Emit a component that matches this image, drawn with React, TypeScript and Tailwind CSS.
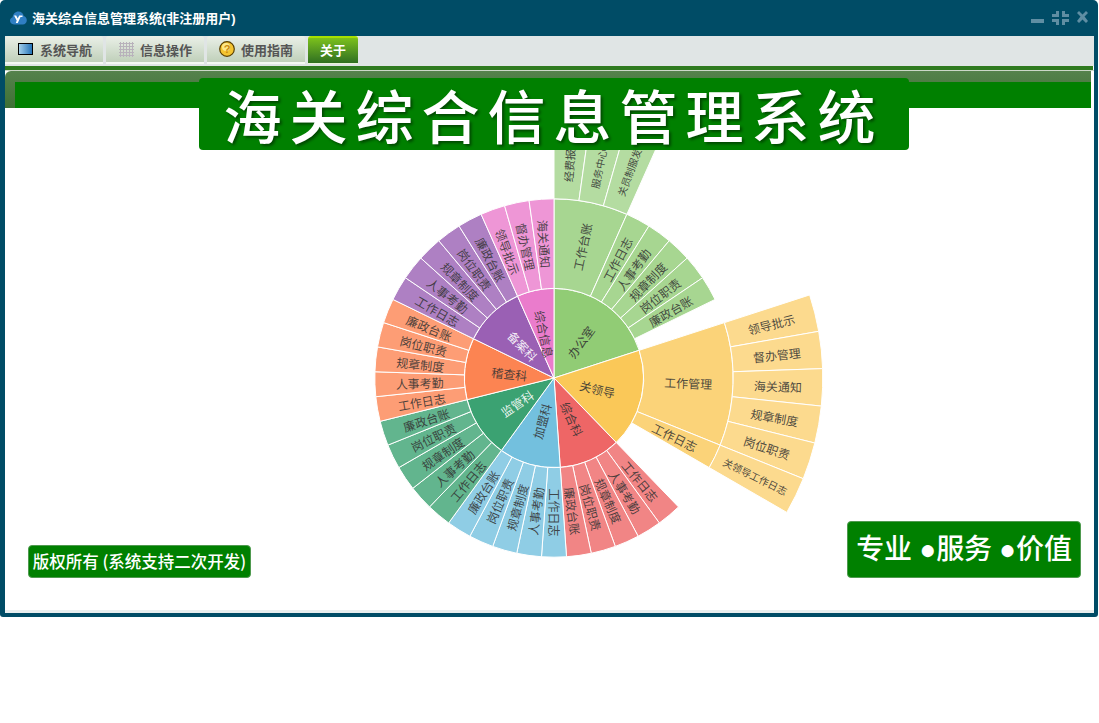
import React from 'react';

interface Node {
  name: string;
  start: number;
  end: number;
  color: string;
  light?: boolean;
  size?: number;
  children?: Node[];
}

const CX = 549;
const CY = 270;
const RING = 89.6;
const CHART_FONT = '"Noto Sans CJK SC", "Noto Sans", sans-serif';

// five evenly spaced leaves, 8 degrees each
function leaves(names: string[], start: number, color: string, size?: number): Node[] {
  return names.map((name, i) => ({ name, start: start + i * 8, end: start + (i + 1) * 8, color, size }));
}

const daily = ['廉政台账', '岗位职责', '规章制度', '人事考勤', '工作日志'];

const tree: Node[] = [
  {
    name: '办公室', start: 0, end: 72, color: '#91cc75',
    children: [
      {
        name: '工作台账', start: 0, end: 24, color: '#91cc75',
        children: [
          { name: '经费报销单', start: 0, end: 8, color: '#91cc75', size: 11 },
          { name: '服务中心工作', start: 8, end: 16, color: '#91cc75', size: 10 },
          { name: '关员制服发放', start: 16, end: 24, color: '#91cc75', size: 10 },
        ],
      },
      ...leaves(['工作日志', '人事考勤', '规章制度', '岗位职责', '廉政台账'], 24, '#91cc75'),
    ],
  },
  {
    name: '关领导', start: 72, end: 136, color: '#fac858',
    children: [
      {
        name: '工作管理', start: 72, end: 112, color: '#fac858',
        children: leaves(['领导批示', '督办管理', '海关通知', '规章制度', '岗位职责'], 72, '#fac858'),
      },
      {
        name: '工作日志', start: 112, end: 120, color: '#fac858',
        children: [{ name: '关领导工作日志', start: 112, end: 120, color: '#fac858', size: 10 }],
      },
    ],
  },
  { name: '综合科', start: 136, end: 176, color: '#ee6666', children: leaves([...daily].reverse(), 136, '#ee6666') },
  { name: '加盟科', start: 176, end: 216, color: '#73c0de', children: leaves([...daily].reverse(), 176, '#73c0de') },
  { name: '监管科', start: 216, end: 256, color: '#3ba272', light: true, children: leaves([...daily].reverse(), 216, '#3ba272') },
  { name: '稽查科', start: 256, end: 296, color: '#fc8452', children: leaves([...daily].reverse(), 256, '#fc8452') },
  { name: '备案科', start: 296, end: 336, color: '#9a60b4', light: true, children: leaves([...daily].reverse(), 296, '#9a60b4') },
  {
    name: '综合信息', start: 336, end: 360, color: '#ea7ccc',
    children: leaves(['领导批示', '督办管理', '海关通知'], 336, '#ea7ccc'),
  },
];

function polar(r: number, deg: number): [number, number] {
  const a = (deg * Math.PI) / 180;
  return [CX + r * Math.sin(a), CY - r * Math.cos(a)];
}

function arcPath(r0: number, r1: number, a0: number, a1: number) {
  const [x1, y1] = polar(r1, a0);
  const [x2, y2] = polar(r1, a1);
  const large = a1 - a0 > 180 ? 1 : 0;
  if (r0 === 0) return `M${CX} ${CY}L${x1} ${y1}A${r1} ${r1} 0 ${large} 1 ${x2} ${y2}Z`;
  const [x3, y3] = polar(r0, a1);
  const [x4, y4] = polar(r0, a0);
  return `M${x1} ${y1}A${r1} ${r1} 0 ${large} 1 ${x2} ${y2}L${x3} ${y3}A${r0} ${r0} 0 ${large} 0 ${x4} ${y4}Z`;
}

const ringOpacity = [1, 0.8, 0.68];

function Slices({ nodes, depth }: { nodes: Node[]; depth: number }) {
  const r0 = depth * RING;
  const r1 = r0 + RING;
  return (
    <>
      {nodes.map((n) => {
        const mid = (n.start + n.end) / 2;
        const [tx, ty] = polar((r0 + r1) / 2, mid);
        const rot = mid <= 180 ? mid - 90 : mid - 270;
        return (
          <g key={n.name + n.start}>
            <path d={arcPath(r0, r1, n.start, n.end)} fill={n.color} fillOpacity={ringOpacity[depth]} stroke="#fff" strokeWidth={1} />
            {n.children && <Slices nodes={n.children} depth={depth + 1} />}
            <text
              x={tx}
              y={ty}
              transform={`rotate(${rot} ${tx} ${ty})`}
              textAnchor="middle"
              dominantBaseline="central"
              fontSize={n.size ?? 12}
              fontFamily={CHART_FONT}
              fill={n.light && depth === 0 ? '#ffffff' : '#333333'}
              fillOpacity={n.light && depth === 0 ? 0.9 : 0.88}
            >
              {n.name}
            </text>
          </g>
        );
      })}
    </>
  );
}

function LogoIcon() {
  return (
    <svg width="17" height="14" viewBox="0 0 17 14">
      <path d="M4 13.5C1.5 13.5 0 11.8 0 9.6 0 7.8 1.2 6.5 2.6 6.2 3 3 5.4 .6 8.4 .6c2.6 0 4.8 1.8 5.3 4.4 1.8.4 3.1 2.1 3.1 4.2 0 2.4-1.8 4.3-4 4.3z" fill="#2f7fc4" />
      <path d="M4 4.500h2.200l1.500 3 1.500-3h3.300v1.500H10.500L7.800 12H5.800l.9-2.400z" fill="#fff" />
    </svg>
  );
}

function NavIcon() {
  return (
    <svg width="15" height="12" viewBox="0 0 15 12">
      <defs>
        <linearGradient id="navFill" x1="0" y1="0" x2="1" y2="0">
          <stop offset="0" stopColor="#a8d4ee" />
          <stop offset="1" stopColor="#1f6fb5" />
        </linearGradient>
      </defs>
      <rect x=".5" y=".5" width="14" height="11" fill="url(#navFill)" stroke="#000" />
    </svg>
  );
}

function GridIcon() {
  const lines = [1, 4, 7, 10, 13];
  return (
    <svg width="15" height="15" viewBox="0 0 15 15" stroke="#b8b2bb" strokeWidth="1">
      {lines.map((p) => (
        <g key={p}>
          <line x1={p + 0.5} y1="0" x2={p + 0.5} y2="15" />
          <line x1="0" y1={p + 0.5} x2="15" y2={p + 0.5} />
        </g>
      ))}
    </svg>
  );
}

function HelpIcon() {
  return (
    <svg width="16" height="16" viewBox="0 0 16 16">
      <circle cx="8" cy="8" r="7.300" fill="#f4c430" stroke="#5a4000" strokeWidth="1.200" />
      <circle cx="7" cy="6" r="4" fill="#fde88a" />
      <text x="8" y="12" textAnchor="middle" fontSize="11" fontWeight="700" fill="#c98a10" fontFamily="Liberation Sans, sans-serif">?</text>
    </svg>
  );
}

function WindowButtons() {
  return (
    <svg width="57" height="16" viewBox="0 0 57 16" fill="#5f8ea3">
      <rect x="0" y="9" width="13" height="4" />
      <path d="M25 1h3v6h-7V4h4zM31 1h3v3h4v3h-7zM21 9h7v6h-3v-3h-4zM31 9h7v3h-4v3h-3z" />
      <path d="M46 3l2-2 3.500 3.500L55 1l2 2-3.500 3.500L57 11l-2 2-3.500-3.500L48 13l-2-2 3.500-4.500z" />
    </svg>
  );
}

const tabs = [
  { label: '系统导航', icon: <NavIcon />, pad: 'pl-[13px] gap-[7px]' },
  { label: '信息操作', icon: <GridIcon />, pad: 'pl-[13px] gap-[6px]' },
  { label: '使用指南', icon: <HelpIcon />, pad: 'pl-[12px] gap-[6px]' },
];

export default function App() {
  return (
    <div className="w-full h-screen bg-white font-['Noto_Sans_CJK_SC','Noto_Sans',sans-serif]">
      <div className="w-[1098px] h-[617px] bg-[#004c66] rounded-t-[5px] rounded-b-[3px] flex flex-col">
        <div className="h-9 flex items-center pl-[10px] pr-[10px] justify-between">
          <div className="flex items-center gap-[5px]">
            <LogoIcon />
            <span className="text-[13px] font-bold text-white leading-none font-['Liberation_Sans','Noto_Sans_CJK_SC',sans-serif]">
              海关综合信息管理系统(非注册用户)
            </span>
          </div>
          <WindowButtons />
        </div>

        <div className="flex-1 ml-[5px] mr-[4px] mb-[4px] bg-white flex flex-col">
          <div className="h-[30px] bg-[#e0e5e5] flex gap-[3px] shrink-0">
            {tabs.map((t) => (
              <div
                key={t.label}
                className={`w-[98px] h-[28px] flex items-center ${t.pad} bg-gradient-to-b from-[#eaf0e8] to-[#c0d0ba] border-b-2 border-[#f4f8f2] rounded-t-[3px] text-[13px] font-bold text-[#555555]`}
              >
                {t.icon}
                <span className="mt-[2px]">{t.label}</span>
              </div>
            ))}
            <div className="w-[50px] h-[28px] pb-[1px] flex items-center justify-center bg-gradient-to-b from-[#7cc11a] to-[#2f7020] border-t-2 border-[#a6e000] border-b border-b-[#e8f4d8] rounded-t-[3px] text-[13px] font-bold text-white">
              关于
            </div>
          </div>
          <div className="h-[4px] bg-[#2f7a1f] mr-[1px] shrink-0" />
          <div className="h-[1px] bg-[#ccd8c8] shrink-0" />
          <div className="h-[37px] mr-[3px] pt-[11px] pl-[10px] bg-gradient-to-b from-[#55824c] to-[#3e7035] rounded-tl-[6px] shrink-0">
            <div className="h-full bg-[#008000]" />
          </div>

          <div className="relative flex-1 min-h-0">
            <svg width="1087" height="502" viewBox="0 0 1087 502" className="block">
              <Slices nodes={tree} depth={0} />
            </svg>

            <div className="absolute left-[194px] top-[-30px] w-[710px] h-[72px] bg-[#008000] rounded-[4px] flex items-center justify-center">
              <span className="text-[58px] font-medium leading-none tracking-[8px] text-white ml-[-1px] [text-shadow:2px_2px_3px_rgba(0,0,0,0.45)]">
                海关综合信息管理系统
              </span>
            </div>

            <div className="absolute left-[23px] top-[437px] w-[223px] h-[33px] bg-[#008000] rounded-[4px] border border-[#4f9a4f] flex items-center justify-center">
              <span className="text-[16.500px] font-medium text-white whitespace-nowrap leading-none">版权所有 (系统支持二次开发)</span>
            </div>

            <div className="absolute left-[842px] top-[413px] w-[234px] h-[57px] bg-[#008000] rounded-[4px] border border-[#4f9a4f] flex items-center justify-center">
              <span className="text-[28px] font-medium tracking-[-0.2px] text-white whitespace-pre leading-none font-['Liberation_Sans','Noto_Sans_CJK_SC',sans-serif]">专业 ●服务 ●价值</span>
            </div>
          </div>
          <div className="h-[3px] bg-[#e8eeee] shrink-0" />
        </div>
      </div>
    </div>
  );
}
